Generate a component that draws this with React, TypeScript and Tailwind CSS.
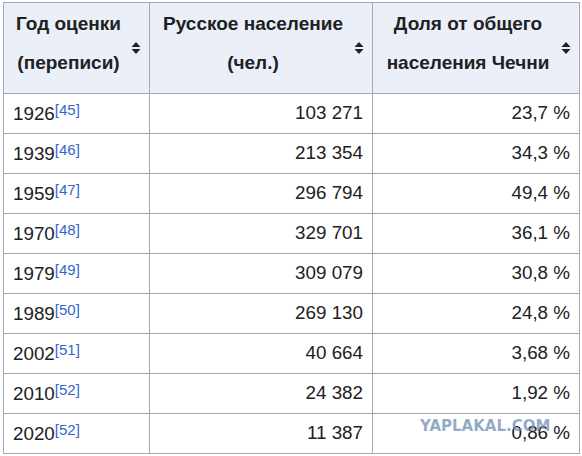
import React from "react";

const rows = [
  { year: "1926", ref: "45", pop: "103 271", share: "23,7 %" },
  { year: "1939", ref: "46", pop: "213 354", share: "34,3 %" },
  { year: "1959", ref: "47", pop: "296 794", share: "49,4 %" },
  { year: "1970", ref: "48", pop: "329 701", share: "36,1 %" },
  { year: "1979", ref: "49", pop: "309 079", share: "30,8 %" },
  { year: "1989", ref: "50", pop: "269 130", share: "24,8 %" },
  { year: "2002", ref: "51", pop: "40 664", share: "3,68 %" },
  { year: "2010", ref: "52", pop: "24 382", share: "1,92 %" },
  { year: "2020", ref: "52", pop: "11 387", share: "0,86 %" },
];

function SortIcon() {
  return (
    <svg width="10" height="12" viewBox="0 0 10 12" className="absolute right-[8px] top-1/2 -translate-y-1/2">
      <path d="M5 0 L9.5 5 H0.5 Z" fill="#202122" />
      <path d="M5 12 L9.5 7 H0.5 Z" fill="#202122" />
    </svg>
  );
}

function Head({ lines, w }: { lines: string[]; w: string }) {
  return (
    <th className={`relative border border-[#a2a9b1] bg-[#eaeff8] ${w} pl-[8px] pr-[24px] pt-[1px] pb-[11px] align-top text-center font-bold text-[19px] leading-[39px]`}>
      {lines.map((l) => (
        <div key={l} className="whitespace-nowrap">{l}</div>
      ))}
      <SortIcon />
    </th>
  );
}

export default function App() {
  return (
    <div className="relative w-[582px] h-[456px] bg-white text-[#202122] overflow-hidden" style={{ fontFamily: '"Liberation Sans", Arial, sans-serif' }}>
      <table className="ml-[3px] mt-[2px] border-collapse table-fixed w-[576px]">
        <thead>
          <tr>
            <Head lines={["Год оценки", "(переписи)"]} w="w-[146px]" />
            <Head lines={["Русское население", "(чел.)"]} w="w-[223px]" />
            <Head lines={["Доля от общего", "населения Чечни"]} w="w-[207px]" />
          </tr>
        </thead>
        <tbody className="text-[18.8px]">
          {rows.map((r) => (
            <tr key={r.year} className="h-[40px]">
              <td className="border border-[#a2a9b1] pl-[9px] pt-[2px]">
                {r.year}
                <sup className="relative top-[-5px] text-[15px] text-[#3366cc]">[{r.ref}]</sup>
              </td>
              <td className="border border-[#a2a9b1] pr-[9px] text-right">{r.pop}</td>
              <td className="border border-[#a2a9b1] pr-[9px] text-right">{r.share}</td>
            </tr>
          ))}
        </tbody>
      </table>
      <div
        className="absolute left-[420px] top-[415px] text-[15px] font-bold text-[#6f8fb4]/75"
        style={{ fontFamily: '"DejaVu Sans", sans-serif' }}
      >
        YAPLAKAL.COM
      </div>
    </div>
  );
}
